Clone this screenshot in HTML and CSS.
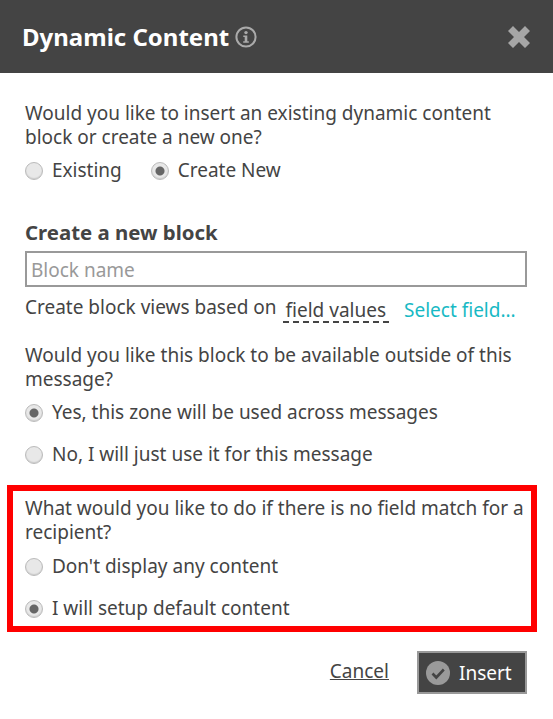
FILE: index.html
```html
<!DOCTYPE html>
<html lang="en">
<head>
  <meta charset="UTF-8" />
  <meta name="viewport" content="width=device-width, initial-scale=1.0"/>
  <title>Dynamic Content</title>
  <link rel="stylesheet" href="styles.css">
</head>
<body>
  <div class="dialog">
    <div class="dialog-header">
      <h1>Dynamic Content</h1>
      <svg class="info-icon" width="22" height="22" viewBox="0 0 22 22">
        <circle cx="11" cy="11" r="9.6" fill="none" stroke="#aaa" stroke-width="2"/>
        <circle cx="11" cy="6.6" r="1.7" fill="#aaa"/>
        <path d="M8.300 9.400h4v5.800h1.500v1.600H8.200v-1.600h1.500v-4.200H8.300z" fill="#aaa"/>
      </svg>
      <svg class="close-icon" width="24" height="24" viewBox="0 0 24 24">
        <path d="M1 6 6 1l6 6 6-6 5 5-6 6 6 6-5 5-6-6-6 6-5-5 6-6z" fill="#a6a6a6"/>
      </svg>
    </div>

    <div class="dialog-body">
      <p class="question">Would you like to insert an existing dynamic content block or create a new one?</p>
      <div class="radio-inline">
        <label><input type="radio" name="source" /> Existing</label>
        <label><input type="radio" name="source" checked /> Create New</label>
      </div>

      <h2>Create a new block</h2>
      <input class="block-name" type="text" placeholder="Block name" />
      <div class="views-row">
        <span>Create block views based on</span>
        <span class="field-type">field values</span>
        <a class="select-field" href="#">Select field...</a>
      </div>

      <p class="question">Would you like this block to be available outside of this message?</p>
      <label class="radio-row"><input type="radio" name="scope" checked /> Yes, this zone will be used across messages</label>
      <label class="radio-row"><input type="radio" name="scope" /> No, I will just use it for this message</label>

      <div class="highlight">
        <p class="question">What would you like to do if there is no field match for a recipient?</p>
        <label class="radio-row"><input type="radio" name="fallback" /> Don't display any content</label>
        <label class="radio-row"><input type="radio" name="fallback" checked /> I will setup default content</label>
      </div>

      <div class="actions">
        <a class="cancel" href="#">Cancel</a>
        <button class="insert" type="button">
          <svg width="24" height="24" viewBox="0 0 24 24">
            <circle cx="12" cy="12" r="12" fill="#9a9a9a"/>
            <path d="M6.500 12.500 10.300 16.500 17.800 8.500" fill="none" stroke="#444" stroke-width="2.600"/>
          </svg>
          Insert
        </button>
      </div>
    </div>
  </div>
</body>
</html>
```

FILE: styles.css
```css
body {
  margin: 0;
  font-family: Tahoma, 'Noto Sans', 'DejaVu Sans', sans-serif;
  font-size: 19px;
  line-height: 24px;
  color: #444;
  background: white;
}
.dialog-header {
  height: 73px;
  background: #444;
  display: flex;
  align-items: center;
  padding: 0 22px 0 22px;
  color: white;
}
.dialog-header h1 {
  margin: 0;
  font-size: 24px;
  font-weight: bold;
}
.info-icon {
  margin-left: 6px;
}
.close-icon {
  margin-left: auto;
}
.dialog-body {
  padding: 28px 26px 0 25px;
}
.question {
  margin: 0;
}
.radio-inline {
  display: flex;
  gap: 29px;
  margin-top: 9px;
}
input[type="radio"] {
  appearance: none;
  width: 18px;
  height: 18px;
  margin: 0 4px 0 0;
  border-radius: 50%;
  border: 1px solid #bbb;
  background: #e8e8e8;
  box-shadow: inset 0 -1px 1px #ccc;
  vertical-align: -3px;
}
input[type="radio"]:checked {
  background: radial-gradient(circle, #666 0 4px, #e8e8e8 5px);
}
h2 {
  margin: 38px 0 7px;
  font-size: 20.4px;
  line-height: 24px;
  font-weight: bold;
}
.block-name {
  display: block;
  box-sizing: border-box;
  width: 100%;
  height: 36px;
  padding: 2px 4px 0;
  border: 2px solid #999;
  font: inherit;
}
.block-name::placeholder {
  color: #999;
}
.views-row {
  display: flex;
  align-items: flex-start;
  margin-top: 8px;
  white-space: nowrap;
}
.field-type {
  margin: 3px 0 0 6px;
  padding: 0 3px;
  height: 23px;
  border-bottom: 2px dashed #444;
}
.select-field {
  margin: 3px 0 0 15px;
  color: #17b9c4;
  text-decoration: none;
}
.views-row + .question {
  margin-top: 20px;
}
.radio-row {
  display: block;
  margin-top: 9px;
}
.radio-row + .radio-row {
  margin-top: 18px;
}
.highlight {
  box-sizing: border-box;
  height: 147px;
  margin: 19px -10px 0 -18px;
  padding: 5px 0 0 12px;
  border: 6px solid #f00;
}
.highlight .question + .radio-row {
  margin-top: 10px;
}
.actions {
  display: flex;
  justify-content: flex-end;
  align-items: center;
  gap: 28px;
  margin-top: 19px;
}
.cancel {
  margin-bottom: 3px;
  color: #444;
}
.insert {
  display: flex;
  align-items: center;
  gap: 9px;
  width: 110px;
  height: 43px;
  padding: 0 7px;
  border: 2px solid #999;
  background: #444;
  color: white;
  font: inherit;
}
```
